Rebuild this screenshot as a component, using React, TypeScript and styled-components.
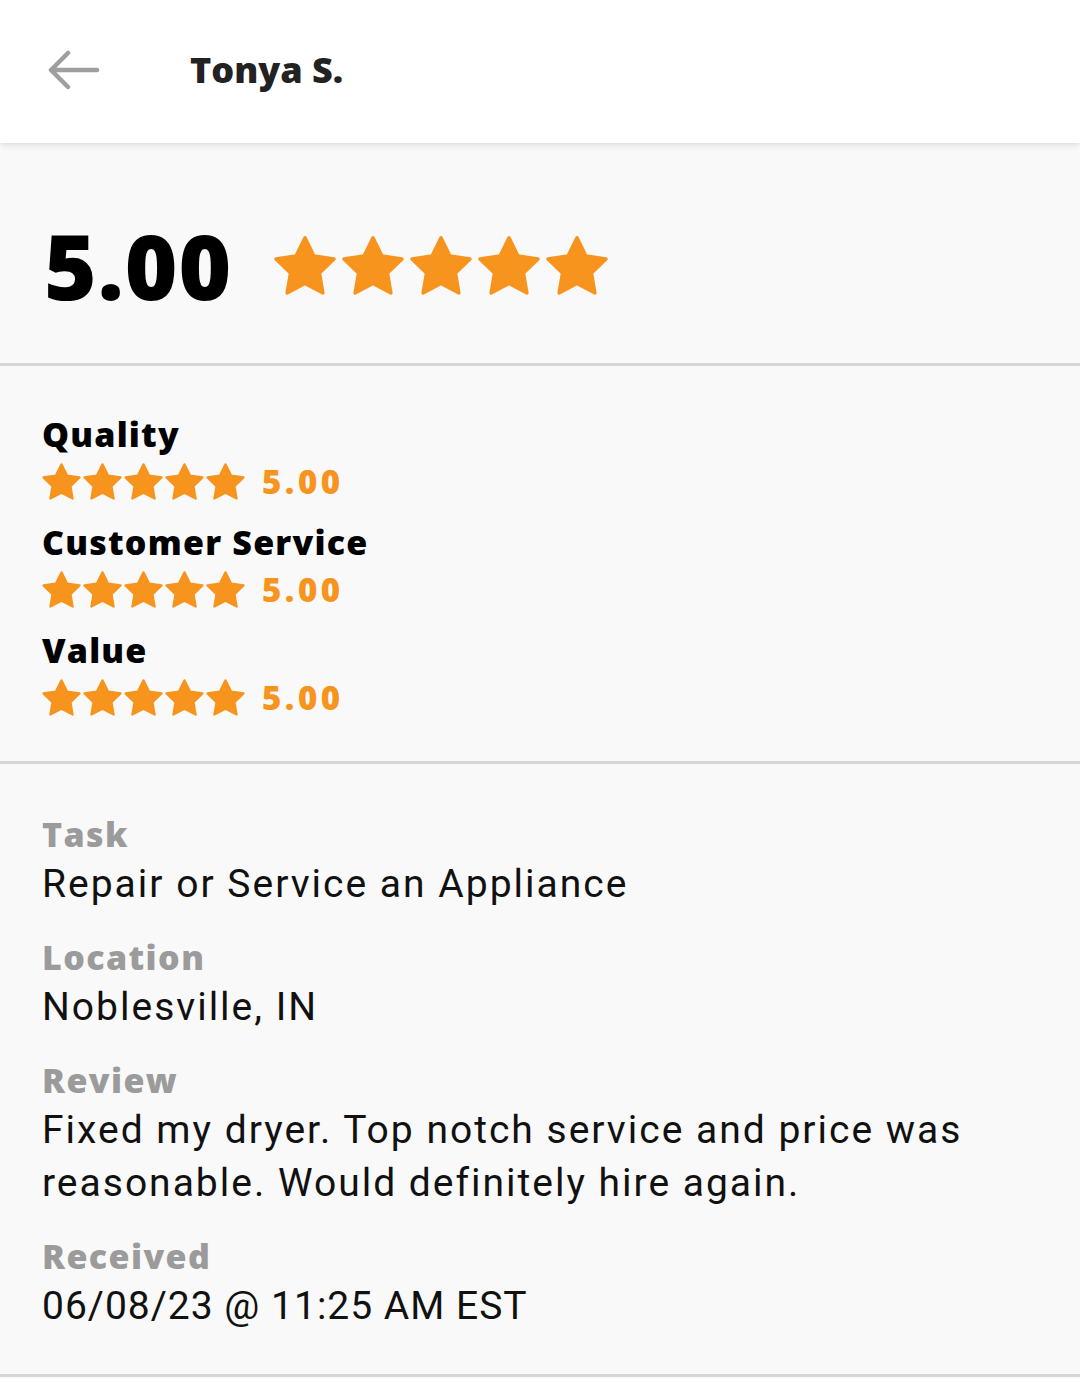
import React from "react";
import styled, { createGlobalStyle } from "styled-components";

const Global = createGlobalStyle`
  html, body { margin: 0; padding: 0; background: #f9f9f9; }
  body { font-family: Roboto, "Liberation Sans", sans-serif; }
`;

const Page = styled.div`
  width: 1080px;
  min-height: 1379px;
  background: #f9f9f9;
`;

const Header = styled.header`
  height: 143px;
  background: #ffffff;
  display: flex;
  align-items: center;
  padding-left: 48px;
  padding-bottom: 4px;
  box-sizing: border-box;
  box-shadow: 0 2px 6px rgba(0, 0, 0, 0.12);
  position: relative;
  z-index: 1;
`;

const BackButton = styled.button`
  border: 0;
  background: none;
  padding: 0;
  width: 52px;
  height: 40px;
  display: flex;
  align-items: center;
  cursor: pointer;
  margin-right: 90px;
`;

const Title = styled.h1`
  margin: 0;
  font-family: "Open Sans", sans-serif;
  font-weight: 800;
  font-size: 36px;
  color: #222222;
  letter-spacing: 0px;
`;

const Section = styled.section<{ $pt: number; $pb: number }>`
  padding: ${(p) => p.$pt}px 44px ${(p) => p.$pb}px 42px;
  border-bottom: 3px solid #d6d6d6;
`;

const OverallRow = styled.div`
  display: flex;
  align-items: center;
  gap: 42px;
  height: 100px;
`;

const BigScore = styled.div`
  font-family: "Open Sans", sans-serif;
  font-weight: 800;
  font-size: 90px;
  line-height: 100px;
  color: #000;
  letter-spacing: 1px;
  padding-left: 2px;
`;

const Stars = styled.div<{ $gap: number }>`
  display: flex;
  gap: ${(p) => p.$gap}px;
`;

const Category = styled.div`
  display: flex;
  flex-direction: column;
  margin-bottom: 14px;
  &:last-child { margin-bottom: 0; }
`;

const CategoryName = styled.div`
  font-family: "Open Sans", sans-serif;
  font-weight: 800;
  font-size: 34px;
  line-height: 46px;
  color: #000;
  letter-spacing: 1.2px;
`;

const StarRow = styled.div`
  display: flex;
  align-items: center;
  height: 48px;
  gap: 17px;
`;

const SmallScore = styled.span`
  font-family: "Open Sans", sans-serif;
  font-weight: 800;
  font-size: 33px;
  color: #f7941d;
  letter-spacing: 3.5px;
`;

const Field = styled.div`
  margin-bottom: 22px;
  &:last-child { margin-bottom: 0; }
`;

const Label = styled.div`
  font-family: "Open Sans", sans-serif;
  font-weight: 800;
  font-size: 34px;
  line-height: 48px;
  color: #9b9b9b;
  letter-spacing: 1.4px;
`;

const Value = styled.div<{ $tracking?: number }>`
  font-family: Roboto, sans-serif;
  font-weight: 400;
  font-size: 39px;
  line-height: 53px;
  color: #111;
  letter-spacing: ${(p) => p.$tracking ?? 2}px;
  max-width: 960px;
`;

const Star = ({ w, h }: { w: number; h: number }) => (
  <svg width={w} height={h} viewBox="1.3 1.3 21.4 20.5">
    <path
      d="M12 2l3.09 6.26L22 9.27l-5 4.87 1.18 6.88L12 17.77l-6.18 3.25L7 14.14 2 9.27l6.91-1.01L12 2z"
      fill="#f7941d"
      stroke="#f7941d"
      strokeWidth="1.2"
      strokeLinejoin="round"
    />
  </svg>
);

const FiveStars = ({ w, h, gap }: { w: number; h: number; gap: number }) => (
  <Stars $gap={gap}>
    {[0, 1, 2, 3, 4].map((i) => (
      <Star key={i} w={w} h={h} />
    ))}
  </Stars>
);

const categories = ["Quality", "Customer Service", "Value"];

export default function App() {
  return (
    <Page>
      <Global />
      <Header>
        <BackButton aria-label="Back">
          <svg width="52" height="40" viewBox="0 0 52 40">
            <path
              d="M49 20H4M20 3L3 20l17 17"
              fill="none"
              stroke="#9e9e9e"
              strokeWidth="4.5"
              strokeLinecap="round"
              strokeLinejoin="round"
            />
          </svg>
        </BackButton>
        <Title>Tonya S.</Title>
      </Header>

      <Section $pt={72} $pb={48}>
        <OverallRow>
          <BigScore>5.00</BigScore>
          <FiveStars w={62} h={61} gap={6} />
        </OverallRow>
      </Section>

      <Section $pt={45} $pb={40}>
        {categories.map((c) => (
          <Category key={c}>
            <CategoryName>{c}</CategoryName>
            <StarRow>
              <FiveStars w={39} h={37} gap={2} />
              <SmallScore>5.00</SmallScore>
            </StarRow>
          </Category>
        ))}
      </Section>

      <Section $pt={46} $pb={41}>
        <Field>
          <Label>Task</Label>
          <Value>Repair or Service an Appliance</Value>
        </Field>
        <Field>
          <Label>Location</Label>
          <Value>Noblesville, IN</Value>
        </Field>
        <Field>
          <Label>Review</Label>
          <Value>
            Fixed my dryer. Top notch service and price was reasonable. Would
            definitely hire again.
          </Value>
        </Field>
        <Field>
          <Label>Received</Label>
          <Value $tracking={1}>06/08/23 @ 11:25 AM EST</Value>
        </Field>
      </Section>
    </Page>
  );
}
